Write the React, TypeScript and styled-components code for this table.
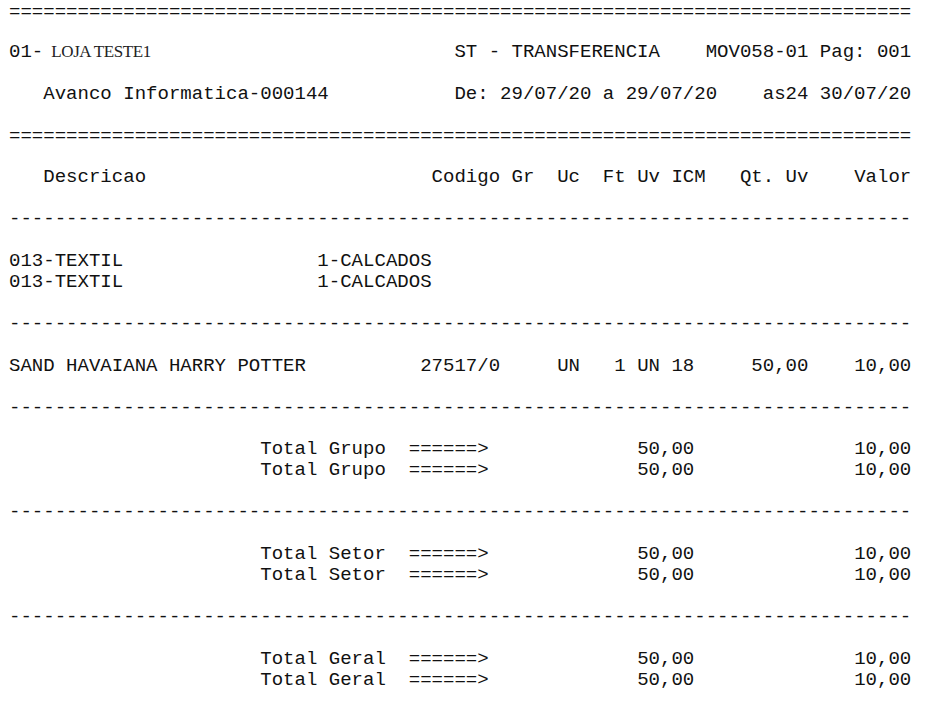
import styled, { createGlobalStyle } from 'styled-components';

const Global = createGlobalStyle`
	html, body {
		margin: 0;
		background: #fff;
	}
	body {
		padding: 0 9px;
	}
`;

const WIDTH = 79;

// monta uma linha de relatorio colocando cada campo na sua coluna
function cols(fields: [number, string][]) {
	let out = '';
	for (const [col, text] of fields) {
		out = out.padEnd(col, ' ') + text;
	}
	return out;
}

const totalRow = (label: string) =>
	cols([
		[22, label],
		[35, '======>'],
		[55, '50,00'],
		[74, '10,00'],
	]);

function App() {
	const equals = '='.repeat(WIDTH);
	const dashes = '-'.repeat(WIDTH);

	return (
		<>
			<Global />
			<Sheet>
				<Rule>{equals}</Rule>
				<Line />
				<Split>
					<span>
						01-<Store>LOJA TESTE1</Store>
					</span>
					<span>ST - TRANSFERENCIA    MOV058-01 Pag: 001</span>
				</Split>
				<Line />
				<Split>
					<span>   Avanco Informatica-000144</span>
					<span>De: 29/07/20 a 29/07/20    as24 30/07/20</span>
				</Split>
				<Line />
				<Line>{equals}</Line>
				<Line />
				<Line>
					{cols([
						[3, 'Descricao'],
						[37, 'Codigo'],
						[44, 'Gr'],
						[48, 'Uc'],
						[52, 'Ft'],
						[55, 'Uv'],
						[58, 'ICM'],
						[64, 'Qt. Uv'],
						[74, 'Valor'],
					])}
				</Line>
				<Line />
				<Line>{dashes}</Line>
				<Line />
				<Line>{cols([[0, '013-TEXTIL'], [27, '1-CALCADOS']])}</Line>
				<Line>{cols([[0, '013-TEXTIL'], [27, '1-CALCADOS']])}</Line>
				<Line />
				<Line>{dashes}</Line>
				<Line />
				<Line>
					{cols([
						[0, 'SAND HAVAIANA HARRY POTTER'],
						[36, '27517/0'],
						[48, 'UN'],
						[53, '1'],
						[55, 'UN'],
						[58, '18'],
						[65, '50,00'],
						[74, '10,00'],
					])}
				</Line>
				<Line />
				<Line>{dashes}</Line>
				<Line />
				<Line>{totalRow('Total Grupo')}</Line>
				<Line>{totalRow('Total Grupo')}</Line>
				<Line />
				<Line>{dashes}</Line>
				<Line />
				<Line>{totalRow('Total Setor')}</Line>
				<Line>{totalRow('Total Setor')}</Line>
				<Line />
				<Line>{dashes}</Line>
				<Line />
				<Line>{totalRow('Total Geral')}</Line>
				<Line>{totalRow('Total Geral')}</Line>
			</Sheet>
		</>
	);
}

const Sheet = styled.div`
	font-family: 'Liberation Mono', 'Courier New', monospace;
	font-size: 19.05px;
	line-height: 20.93px;
	color: #111;
	width: ${WIDTH}ch;
`;

const Line = styled.div`
	white-space: pre;
	height: 20.93px;
`;

// a primeira regua fica um pouco mais baixa no original
const Rule = styled(Line)`
	padding-top: 2px;
	height: 18.93px;
`;

const Split = styled(Line)`
	display: flex;
	justify-content: space-between;
`;

const Store = styled.span`
	font-family: 'Liberation Serif', 'Times New Roman', serif;
	font-size: 17px;
	letter-spacing: -0.4px;
	margin-left: 8px;
	color: #222;
`;

export default App;
